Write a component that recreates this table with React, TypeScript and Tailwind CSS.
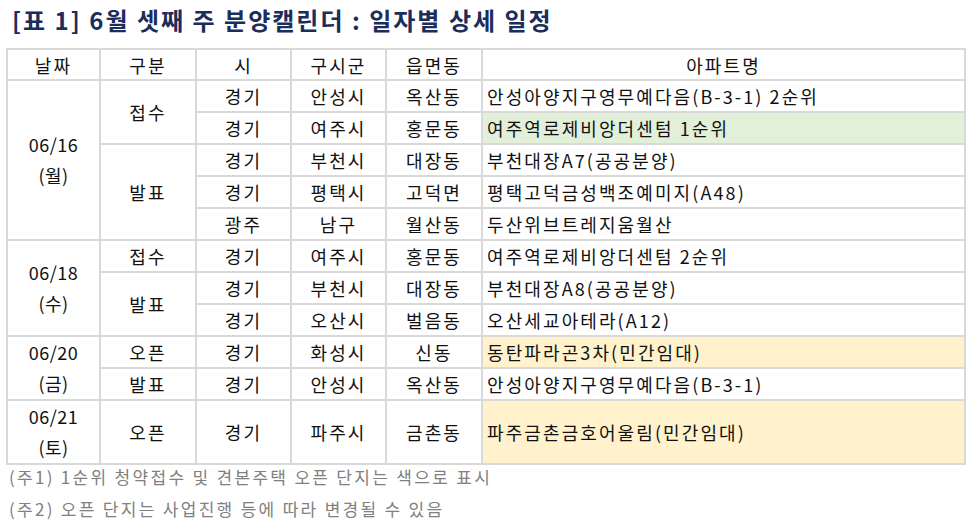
import React from "react"

type Row = {
  date?: { text: string[]; span: number }
  kind?: { text: string; span: number }
  si: string
  gu: string
  dong: string
  apt: string
  bg?: string
  tall?: boolean
}

const rows: Row[] = [
  { date: { text: ["06/16", "(월)"], span: 5 }, kind: { text: "접수", span: 2 }, si: "경기", gu: "안성시", dong: "옥산동", apt: "안성아양지구영무예다음(B-3-1) 2순위" },
  { si: "경기", gu: "여주시", dong: "홍문동", apt: "여주역로제비앙더센텀 1순위", bg: "bg-[#e2efd9]" },
  { kind: { text: "발표", span: 3 }, si: "경기", gu: "부천시", dong: "대장동", apt: "부천대장A7(공공분양)" },
  { si: "경기", gu: "평택시", dong: "고덕면", apt: "평택고덕금성백조예미지(A48)" },
  { si: "광주", gu: "남구", dong: "월산동", apt: "두산위브트레지움월산" },
  { date: { text: ["06/18", "(수)"], span: 3 }, kind: { text: "접수", span: 1 }, si: "경기", gu: "여주시", dong: "홍문동", apt: "여주역로제비앙더센텀 2순위" },
  { kind: { text: "발표", span: 2 }, si: "경기", gu: "부천시", dong: "대장동", apt: "부천대장A8(공공분양)" },
  { si: "경기", gu: "오산시", dong: "벌음동", apt: "오산세교아테라(A12)" },
  { date: { text: ["06/20", "(금)"], span: 2 }, kind: { text: "오픈", span: 1 }, si: "경기", gu: "화성시", dong: "신동", apt: "동탄파라곤3차(민간임대)", bg: "bg-[#fff2cc]" },
  { kind: { text: "발표", span: 1 }, si: "경기", gu: "안성시", dong: "옥산동", apt: "안성아양지구영무예다음(B-3-1)" },
  { date: { text: ["06/21", "(토)"], span: 1 }, kind: { text: "오픈", span: 1 }, si: "경기", gu: "파주시", dong: "금촌동", apt: "파주금촌금호어울림(민간임대)", bg: "bg-[#fff2cc]", tall: true },
]

const cell = "border-2 border-[#d9d9d9] text-center align-middle p-0 whitespace-nowrap"

export default function App() {
  return (
    <div className="w-[967px] h-[521px] bg-white overflow-hidden text-[#111]" style={{ fontFamily: '"Noto Sans CJK KR", "Noto Sans", sans-serif' }}>
      <h1 className="pl-[12px] pt-[2px] h-[48px] text-[24px] font-bold text-[#1b2d5b] leading-[36px] tracking-[2px] whitespace-nowrap">
        [표 1] 6월 셋째 주 분양캘린더 : 일자별 상세 일정
      </h1>
      <table className="ml-[6px] w-[960px] table-fixed border-collapse text-[18px] leading-[28px] tracking-[2.1px]">
        <colgroup>
          <col className="w-[93px]" />
          <col className="w-[96px]" />
          <col className="w-[95px]" />
          <col className="w-[95px]" />
          <col className="w-[96px]" />
          <col />
        </colgroup>
        <thead>
          <tr className="h-[31px]">
            <th className={cell + " font-normal"}>날짜</th>
            <th className={cell + " font-normal"}>구분</th>
            <th className={cell + " font-normal"}>시</th>
            <th className={cell + " font-normal"}>구시군</th>
            <th className={cell + " font-normal"}>읍면동</th>
            <th className={cell + " font-normal"}>아파트명</th>
          </tr>
        </thead>
        <tbody>
          {rows.map((r, i) => (
            <tr key={i} className={r.tall ? "h-[61px]" : "h-[32px]"}>
              {r.date && (
                <td rowSpan={r.date.span} className={cell + " leading-[31px] tracking-[0.5px]"}>
                  {r.date.text.map((t) => (
                    <div key={t}>{t}</div>
                  ))}
                </td>
              )}
              {r.kind && (
                <td rowSpan={r.kind.span} className={cell}>
                  {r.kind.text}
                </td>
              )}
              <td className={cell}>{r.si}</td>
              <td className={cell}>{r.gu}</td>
              <td className={cell}>{r.dong}</td>
              <td className={cell + " text-left pl-[4px] " + (r.bg ?? "")}>{r.apt}</td>
            </tr>
          ))}
        </tbody>
      </table>
      <div className="pl-[9px] -mt-[4px] text-[17px] text-[#808080] leading-[32px] tracking-[2.3px] whitespace-nowrap">
        <p>(주1) 1순위 청약접수 및 견본주택 오픈 단지는 색으로 표시</p>
        <p>(주2) 오픈 단지는 사업진행 등에 따라 변경될 수 있음</p>
      </div>
    </div>
  )
}
